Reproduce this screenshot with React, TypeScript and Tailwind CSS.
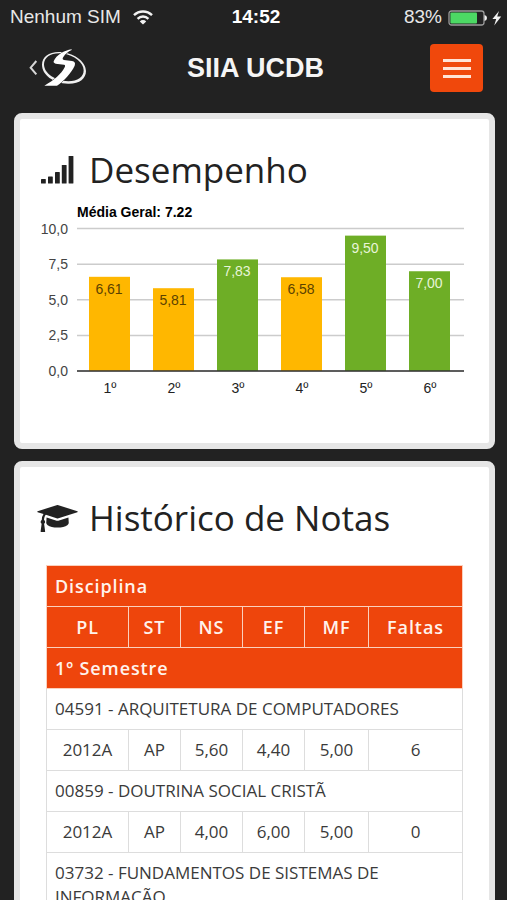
import type { ReactNode } from "react";

const GRADES = [
    { label: "1º", value: 6.61 },
    { label: "2º", value: 5.81 },
    { label: "3º", value: 7.83 },
    { label: "4º", value: 6.58 },
    { label: "5º", value: 9.5 },
    { label: "6º", value: 7.0 },
];

const TICKS = [10, 7.5, 5, 2.5, 0];

const COURSES = [
    { name: "04591 - ARQUITETURA DE COMPUTADORES", cells: ["2012A", "AP", "5,60", "4,40", "5,00", "6"] },
    { name: "00859 - DOUTRINA SOCIAL CRISTÃ", cells: ["2012A", "AP", "4,00", "6,00", "5,00", "0"] },
    { name: "03732 - FUNDAMENTOS DE SISTEMAS DE INFORMAÇÃO", cells: [] },
];

const formatNumber = (value: number, digits: number) => value.toFixed(digits).replace(".", ",");

function WifiIcon() {
    return (
        <svg viewBox="0 0 20 15" className="w-5 h-[15px]" fill="none" stroke="#f2f2f2" strokeWidth="2.4" aria-hidden="true">
            <path d="M1 5.2a12.7 12.7 0 0 1 18 0" />
            <path d="M4.6 8.8a7.6 7.6 0 0 1 10.8 0" />
            <path d="M10 14.6 6.8 11.4a4.6 4.6 0 0 1 6.4 0Z" fill="#f2f2f2" stroke="none" />
        </svg>
    );
}

function BatteryIcon() {
    return (
        <svg viewBox="0 0 54 16" className="w-[54px] h-4" aria-hidden="true">
            <rect x="1" y="1" width="35" height="14" rx="2.5" fill="none" stroke="#9a9a9a" strokeWidth="1.3" />
            <rect x="2.4" y="2.4" width="26.6" height="11.2" rx="1" fill="#4cd964" />
            <path d="M36.5 5q2.500.6 2.500 3t-2.500 3Z" fill="#f2f2f2" />
            <path d="M51 1 44.400 9h3.800l-2 6.600 7-9h-4Z" fill="#f2f2f2" />
        </svg>
    );
}

function Logo() {
    return (
        <svg viewBox="84 144 180 120" className="w-[60px] h-10" aria-hidden="true">
            <path d="M109 183 92 203l17 20" fill="none" stroke="#d8d8d8" strokeWidth="6" />
            <path
                fillRule="evenodd"
                fill="#f0f0f0"
                d="M184 156C150 153 126 169 126 194c0 30 34 56 78 57 34 1 54-15 54-38 0-26-30-51-74-57ZM186 160c38 6 65 29 65 51 0 20-18 33-46 33-40-1-73-24-73-51 0-22 22-36 54-33Z"
            />
            <path
                fill="#fff"
                stroke="#222"
                strokeWidth="3"
                paintOrder="stroke"
                d="M215 148c-22 3-46 17-54 36-1 4 2 6 6 7l25 3c4 1 4 4 2 8-10 20-32 39-61 55h38c20-14 42-36 53-60 3-8 0-13-8-14l-24-3c-5-1-5-4-2-9 6-9 14-16 25-21Z"
            />
        </svg>
    );
}

function SignalIcon() {
    return (
        <svg viewBox="0 0 33 28" className="w-[33px] h-7" fill="#222" aria-hidden="true">
            <rect x="0" y="23" width="4.8" height="4.6" rx=".6" />
            <rect x="7" y="20.5" width="4.8" height="7.1" rx=".6" />
            <rect x="14" y="16" width="4.8" height="11.6" rx=".6" />
            <rect x="20.8" y="9" width="4.8" height="18.6" rx=".6" />
            <rect x="27.6" y="0" width="4.8" height="27.6" rx=".6" />
        </svg>
    );
}

function GraduationCapIcon() {
    return (
        <svg viewBox="0 128 2304 1536" className="w-[41px] h-[27px]" fill="#222" aria-hidden="true">
            <path d="M1774 836l18 316q4 69-82 128t-235 93.500-323 34.500-323-34.500-235-93.500-82-128l18-316 574 181q22 7 48 7t48-7zm530-324q0 23-22 31l-1120 352q-4 1-10 1t-10-1l-652-206q-43 34-71 111.500t-34 178.500q63 36 63 109 0 69-58 107l58 433q2 14-8 25-9 11-24 11h-192q-15 0-24-11-10-11-8-25l58-433q-58-38-58-107 0-73 65-111 11-207 98-330l-333-104q-22-8-22-31t22-31l1120-352q4-1 10-1t10 1l1120 352q22 8 22 31z" />
        </svg>
    );
}

function Card({ title, icon, children }: { title: string; icon: ReactNode; children: ReactNode }) {
    return (
        <section className="bg-white border-6 border-[#e6e6e6] rounded-lg pt-7">
            <h2 className="flex items-center pl-[17px] font-['Open_Sans',sans-serif] text-[35px] leading-[46px] text-[#222]">
                <span className="w-13 flex justify-start">{icon}</span>
                {title}
            </h2>
            {children}
        </section>
    );
}

function GradesChart() {
    const baseline = 171;
    const y = (value: number) => baseline - value * 14.25;

    return (
        <svg
            viewBox="0 0 429 200"
            className="block w-full h-auto font-['Liberation_Sans',Arial,sans-serif] text-sm"
            role="img"
            aria-label="Média por semestre"
        >
            <text x="37" y="17" fontWeight="bold" fill="#000">Média Geral: 7.22</text>
            {TICKS.map((tick) => (
                <g key={tick}>
                    <line x1="37" x2="424" y1={y(tick)} y2={y(tick)} stroke="#ccc" strokeWidth="1.5" />
                    <text x="28" y={y(tick) + 5} textAnchor="end" fill="#444">{formatNumber(tick, 1)}</text>
                </g>
            ))}
            {GRADES.map(({ label, value }, i) => {
                const center = 70 + i * 64;
                const approved = value >= 7;
                return (
                    <g key={label} textAnchor="middle">
                        <rect
                            x={center - 21}
                            y={y(value)}
                            width="41"
                            height={baseline - y(value)}
                            fill={approved ? "#6eae26" : "#ffb700"}
                        />
                        <text x={center - 1} y={y(value) + 17} fill={approved ? "#e8f5d8" : "#5c4200"}>
                            {formatNumber(value, 2)}
                        </text>
                        <text x={center} y="193" fill="#222">{label}</text>
                    </g>
                );
            })}
            <line x1="37" x2="424" y1={baseline} y2={baseline} stroke="#333" strokeWidth="1.5" />
        </svg>
    );
}

function GradesTable() {
    const head = "border border-[#fbd0bd] bg-[#ee450c] text-lg leading-6 text-[#fff3ec] font-semibold tracking-wider";

    return (
        <table className="w-full table-fixed border-collapse font-['Open_Sans',sans-serif] text-[17px] leading-6 text-[#3a3a3a]">
            <colgroup>
                <col className="w-[82px]" />
                <col className="w-[52px]" />
                <col className="w-[62px]" />
                <col className="w-[62px]" />
                <col className="w-[64px]" />
                <col />
            </colgroup>
            <thead>
                <tr>
                    <th colSpan={6} className={`${head} px-2 py-2 text-left`}>Disciplina</th>
                </tr>
                <tr>
                    {["PL", "ST", "NS", "EF", "MF", "Faltas"].map((name) => (
                        <th key={name} className={`${head} py-2 text-center`}>{name}</th>
                    ))}
                </tr>
                <tr>
                    <th colSpan={6} className={`${head} px-2 py-2 text-left`}>1º Semestre</th>
                </tr>
            </thead>
            {COURSES.map((course) => (
                <tbody key={course.name}>
                    <tr>
                        <td colSpan={6} className="border border-[#ddd] px-2 py-2">{course.name}</td>
                    </tr>
                    {course.cells.length > 0 && (
                        <tr>
                            {course.cells.map((cell, i) => (
                                <td key={i} className="border border-[#ddd] py-2 text-center">{cell}</td>
                            ))}
                        </tr>
                    )}
                </tbody>
            ))}
        </table>
    );
}

export default function App() {
    return (
        <div className="min-h-screen bg-[#222] font-['Liberation_Sans',Arial,sans-serif]">
            <div className="grid grid-cols-3 items-center h-[35px] pl-[10px] pr-[5px] text-[19px] text-[#e8e8e8]">
                <div className="flex items-center gap-3 whitespace-nowrap">
                    Nenhum SIM
                    <WifiIcon />
                </div>
                <div className="text-center font-bold text-white">14:52</div>
                <div className="flex items-center justify-end gap-[6px]">
                    83%
                    <BatteryIcon />
                </div>
            </div>

            <header className="grid grid-cols-[1fr_auto_1fr] items-center h-[66px] pl-7 pr-6">
                <a href="#" aria-label="Voltar" className="justify-self-start">
                    <Logo />
                </a>
                <h1 className="text-[27px] leading-8 font-bold text-[#f5f5f5]">SIIA UCDB</h1>
                <button
                    type="button"
                    aria-label="Menu"
                    className="justify-self-end flex flex-col items-center justify-center gap-[5px] w-[53px] h-12 rounded-sm bg-[#f0480c]"
                >
                    <span className="w-7 h-[3px] bg-[#ffe3d6]" />
                    <span className="w-7 h-[3px] bg-[#ffe3d6]" />
                    <span className="w-7 h-[3px] bg-[#ffe3d6]" />
                </button>
            </header>

            <main className="flex flex-col gap-3 pt-3 pl-[14px] pr-3">
                <Card title="Desempenho" icon={<span className="pl-1"><SignalIcon /></span>}>
                    <div className="px-5 pt-[7px] pb-[43px]">
                        <GradesChart />
                    </div>
                </Card>
                <Card title="Histórico de Notas" icon={<GraduationCapIcon />}>
                    <div className="px-[26px] pt-6 pb-6">
                        <GradesTable />
                    </div>
                </Card>
            </main>
        </div>
    );
}
